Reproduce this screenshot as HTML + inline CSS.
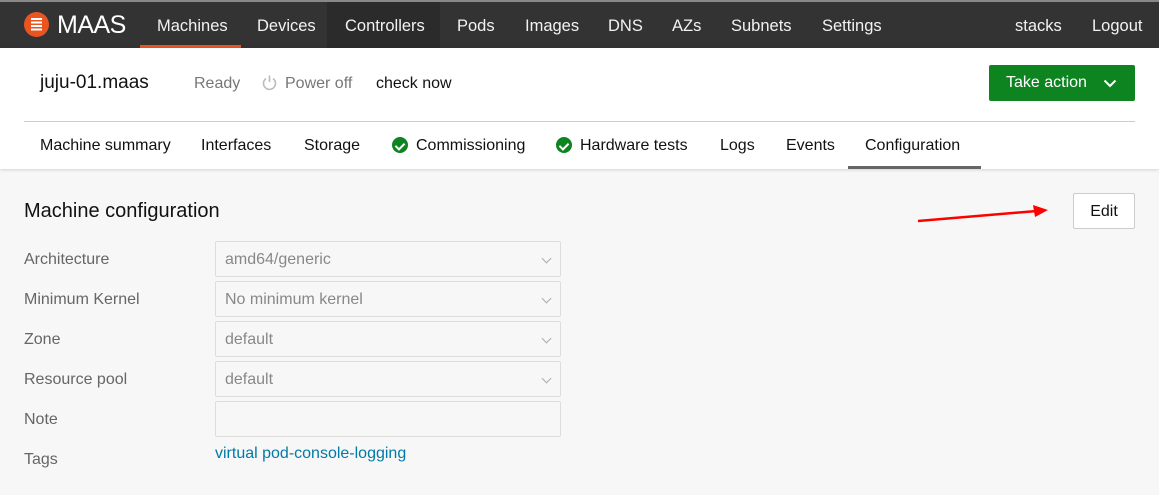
<!DOCTYPE html>
<html><head><style>
*{margin:0;padding:0;box-sizing:border-box}
body{width:1159px;height:495px;background:#f7f7f7;font-family:"Liberation Sans",sans-serif;position:relative;overflow:hidden}
.a{position:absolute;white-space:nowrap}
.nav{position:absolute;left:0;top:0;width:1159px;height:48px;background:#333;border-top:2px solid #888}
.nv{position:absolute;top:15px;font-size:16.5px;color:#f2f2f2}
.white{position:absolute;left:0;top:48px;width:1159px;height:121px;background:#fff;box-shadow:0 1px 3px rgba(0,0,0,.15)}
.tab{position:absolute;top:137px;font-size:16px;color:#111}
.chk{position:absolute;top:137px;width:16px;height:16px;border-radius:50%;background:#0e8420}
.chk:after{content:"";position:absolute;left:5px;top:3.5px;width:4px;height:7px;border:solid #fff;border-width:0 2px 2px 0;transform:rotate(45deg)}
.lbl{position:absolute;left:24px;font-size:16px;color:#666}
.fld{position:absolute;left:215px;width:346px;height:36px;border:1px solid #ddd;background:#f7f7f7;border-radius:2px;font-size:16px;color:#888;padding:9px 9px}
.car{position:absolute;right:10px;top:13px;width:7px;height:7px;border:solid #aaa;border-width:0 1px 1px 0;transform:rotate(45deg)}
</style></head><body>
<div class="nav">
<div class="a" style="left:327px;top:0;width:113px;height:46px;background:#2b2b2b"></div>
<div class="a" style="left:140px;top:43px;width:101px;height:3px;background:#e95420"></div>
<div class="a" style="left:24px;top:10px;width:25px;height:25px;border-radius:50%;background:#e95420"></div>
<div class="a" style="left:31px;top:16px;width:11px;height:13px;background:repeating-linear-gradient(#fff 0 2px,transparent 2px 3.5px)"></div>
<div class="nv" style="left:57px;top:9px;font-size:25px;color:#fff;letter-spacing:-0.5px">MAAS</div>
<div class="nv" style="left:157px">Machines</div>
<div class="nv" style="left:257px">Devices</div>
<div class="nv" style="left:345px">Controllers</div>
<div class="nv" style="left:457px">Pods</div>
<div class="nv" style="left:525px">Images</div>
<div class="nv" style="left:608px">DNS</div>
<div class="nv" style="left:672px">AZs</div>
<div class="nv" style="left:731px">Subnets</div>
<div class="nv" style="left:822px">Settings</div>
<div class="nv" style="left:1015px">stacks</div>
<div class="nv" style="left:1092px">Logout</div>
</div>
<div class="white"></div>
<div class="a" style="left:40px;top:72px;font-size:19px;color:#111">juju-01.maas</div>
<div class="a" style="left:194px;top:75px;font-size:16px;color:#777">Ready</div>
<svg class="a" style="left:261px;top:74px" width="17" height="17" viewBox="0 0 17 17"><path d="M5 4.5A6 6 0 1 0 12 4.5" fill="none" stroke="#bbb" stroke-width="1.6"/><path d="M8.5 1.5V8" stroke="#bbb" stroke-width="1.6"/></svg>
<div class="a" style="left:285px;top:75px;font-size:16px;color:#777">Power off</div>
<div class="a" style="left:376px;top:75px;font-size:16px;color:#111">check now</div>
<div class="a" style="left:989px;top:65px;width:146px;height:36px;background:#0e8420;border-radius:2px;color:#fff;font-size:16px;padding:9px 0 0 17px">Take action</div>
<svg class="a" style="left:1103px;top:79px" width="14" height="9"><path d="M1.5 1.5L7 7L12.5 1.5" fill="none" stroke="#fff" stroke-width="2"/></svg>
<div class="a" style="left:24px;top:121px;width:1111px;height:1px;background:#ccc"></div>
<div class="tab" style="left:40px">Machine summary</div>
<div class="tab" style="left:201px">Interfaces</div>
<div class="tab" style="left:304px">Storage</div>
<div class="chk" style="left:392px"></div>
<div class="tab" style="left:416px">Commissioning</div>
<div class="chk" style="left:556px"></div>
<div class="tab" style="left:580px">Hardware tests</div>
<div class="tab" style="left:720px">Logs</div>
<div class="tab" style="left:786px">Events</div>
<div class="tab" style="left:865px">Configuration</div>
<div class="a" style="left:848px;top:166px;width:133px;height:3px;background:#666"></div>
<div class="a" style="left:24px;top:200px;font-size:20px;color:#111">Machine configuration</div>
<div class="a" style="left:1073px;top:193px;width:62px;height:36px;background:#fff;border:1px solid #ccc;border-radius:2px;font-size:16px;color:#111;text-align:center;padding-top:9px">Edit</div>
<svg class="a" style="left:915px;top:203px" width="140" height="24"><path d="M3 18L122 8" stroke="#f00" stroke-width="2.5"/><path d="M133 7L118 2L120 14Z" fill="#f00"/></svg>
<div class="lbl" style="top:251px">Architecture</div>
<div class="lbl" style="top:291px">Minimum Kernel</div>
<div class="lbl" style="top:331px">Zone</div>
<div class="lbl" style="top:371px">Resource pool</div>
<div class="lbl" style="top:411px">Note</div>
<div class="lbl" style="top:451px">Tags</div>
<div class="fld" style="top:241px">amd64/generic<div class="car"></div></div>
<div class="fld" style="top:281px">No minimum kernel<div class="car"></div></div>
<div class="fld" style="top:321px">default<div class="car"></div></div>
<div class="fld" style="top:361px">default<div class="car"></div></div>
<div class="fld" style="top:401px"></div>
<div class="a" style="left:215px;top:445px;font-size:16px;color:#007aa6">virtual pod-console-logging</div>
</body></html>
